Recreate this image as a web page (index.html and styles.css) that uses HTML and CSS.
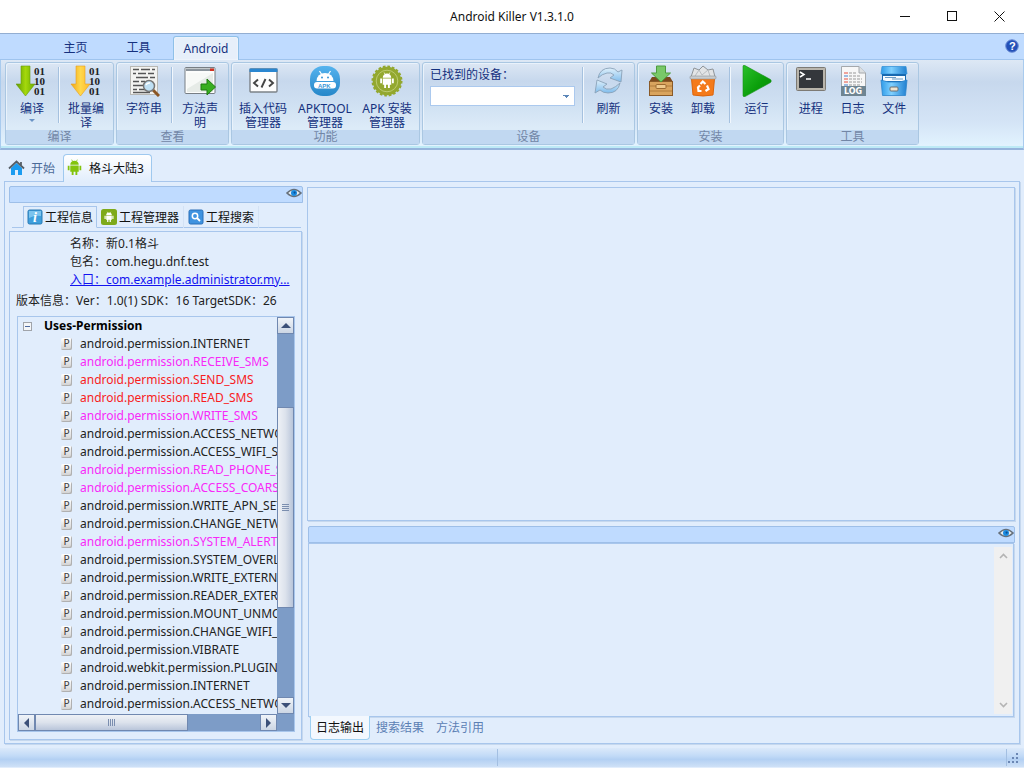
FILE: index.html
```html
<!DOCTYPE html>
<html lang="zh-CN">
<head>
    <meta charset="UTF-8">
    <meta name="viewport" content="width=device-width, initial-scale=1.0">
    <title>Android Killer V1.3.1.0</title>
    <link rel="stylesheet" href="styles.css">
</head>
<body>
    <!-- shared icons -->
    <svg class="defs" width="0" height="0" aria-hidden="true">
        <defs>
            <linearGradient id="green" x1="0" x2="1"><stop offset="0" stop-color="#5f9c00"/><stop offset=".5" stop-color="#a4d80c"/><stop offset="1" stop-color="#6cae00"/></linearGradient>
            <linearGradient id="gold" x1="0" x2="1"><stop offset="0" stop-color="#f0a818"/><stop offset=".5" stop-color="#ffd84c"/><stop offset="1" stop-color="#ffb82a"/></linearGradient>
            <linearGradient id="sky" x1="0" x2="0" y1="0" y2="1"><stop offset="0" stop-color="#55b3ee"/><stop offset="1" stop-color="#2687c9"/></linearGradient>
            <linearGradient id="play" x1="0" x2="1" y1="0" y2="1"><stop offset="0" stop-color="#2bc02b"/><stop offset=".6" stop-color="#0a9e0a"/><stop offset="1" stop-color="#0a8a0a"/></linearGradient>
            <linearGradient id="pale" x1="0" x2="0" y1="0" y2="1"><stop offset="0" stop-color="#dff0fb"/><stop offset="1" stop-color="#7fbcec"/></linearGradient>
            <linearGradient id="cabinet" x1="0" x2="1"><stop offset="0" stop-color="#2f9be8"/><stop offset=".4" stop-color="#7fd0ff"/><stop offset="1" stop-color="#1f7fd0"/></linearGradient>
        </defs>
        <symbol id="eye" viewBox="0 0 16 12">
            <path d="M1 6Q8-1 15 6Q8 13 1 6Z" fill="#e8eef2" stroke="#66707a" stroke-width="1.6"/>
            <circle cx="8" cy="6" r="3" fill="#1b8be0"/><circle cx="8.6" cy="5.6" r="1.1" fill="#0b4f96"/>
        </symbol>
        <symbol id="droid" viewBox="0 0 16 18">
            <path d="M3.5 6A4.5 4.3 0 0 1 12.500 6ZM3.500 6.800H12.500V13.500H11V17H9V13.500H7V17H5V13.500H3.500ZM.8 7H2.700V12H.8ZM13.300 7H15.200V12H13.300Z"/>
            <path d="M5 .6L6 2.600M11 .6L10 2.600" stroke="currentColor" stroke-width=".8"/>
        </symbol>
    </svg>

    <div class="window">
        <header class="titlebar">
            <h1>Android Killer V1.3.1.0</h1>
            <div class="window-buttons">
                <button aria-label="Minimize"><svg width="11" height="11"><path d="M0 5.500H10" stroke="#111"/></svg></button>
                <button aria-label="Maximize"><svg width="11" height="11"><rect x=".5" y=".5" width="9" height="9" fill="none" stroke="#111"/></svg></button>
                <button aria-label="Close"><svg width="11" height="11"><path d="M.5 .5L10.500 10.500M10.500 .5L.5 10.500" stroke="#111"/></svg></button>
            </div>
        </header>

        <nav class="ribbon-tabs">
            <button>主页</button>
            <button>工具</button>
            <button class="active">Android</button>
            <button class="help" aria-label="Help">
                <svg width="14" height="14" viewBox="0 0 14 14"><circle cx="7" cy="7" r="6.300" fill="#2350b8" stroke="#6d8fd6"/><text x="4" y="11" font-family="Liberation Sans" font-weight="bold" font-size="11" fill="#fff">?</text></svg>
            </button>
        </nav>

        <div class="ribbon">
            <section class="group g-build">
                <div class="group-body">
                    <button class="tool">
                        <svg width="32" height="32" viewBox="0 0 32 32"><path d="M5 1H14V19H19L9.500 31L0 19H5Z" fill="url(#green)" stroke="#6a9a10" stroke-width=".6"/><g class="bits"><text x="18" y="10">01</text><text x="18" y="20">10</text><text x="18" y="30">01</text></g></svg>
                        <span>编译</span><i class="drop"></i>
                    </button>
                    <div class="sep"></div>
                    <button class="tool">
                        <svg width="32" height="32" viewBox="0 0 32 32"><path d="M6 1H15V19H20L10.500 31L1 19H6Z" fill="url(#gold)" stroke="#e8a020" stroke-width=".6"/><g class="bits"><text x="19" y="10">01</text><text x="19" y="20">10</text><text x="19" y="30">01</text></g></svg>
                        <span>批量编<br>译</span>
                    </button>
                </div>
                <h2>编译</h2>
            </section>

            <section class="group g-view">
                <div class="group-body">
                    <button class="tool">
                        <svg width="32" height="32" viewBox="0 0 32 32"><rect x="2.500" y="1.500" width="27" height="28" fill="#f3f3f0" stroke="#b8b8b4"/><path d="M5 4.500H11M13 4.500H22M24 4.500H27M5 8.500H8M10 8.500H18M20 8.500H26M8 12.500H20M22 12.500H27M5 16.500H11M13 16.500H17M5 20.500H15M5 24.500H9M11 24.500H17M5 27.500H22" stroke="#555" stroke-width="1.400"/><path d="M25 25L31 31" stroke="#8a5524" stroke-width="3"/><circle cx="21" cy="21" r="5.500" fill="#bfe0f4" stroke="#777" stroke-width="1.500"/><path d="M18 20Q19 17.500 22 18" fill="none" stroke="#fff" stroke-width="1.500"/></svg>
                        <span>字符串</span>
                    </button>
                    <div class="sep"></div>
                    <button class="tool">
                        <svg width="32" height="32" viewBox="0 0 32 32"><rect x="1" y="2.500" width="30" height="26" rx="1" fill="#fcfdfc" stroke="#777e84"/><path d="M2 3.500H30V6H2Z" fill="#8b949c"/><path d="M26 3.500H30V6H26Z" fill="#d03020"/><path d="M3 8H29V27H3Z" fill="#e6ebe7"/><path d="M3 8H29L3 24Z" fill="#f7f9f7"/><path d="M17 19H23V14L31.500 22L23 30V25H17Z" fill="#38ae20" stroke="#1f7a10"/></svg>
                        <span>方法声<br>明</span>
                    </button>
                </div>
                <h2>查看</h2>
            </section>

            <section class="group g-func">
                <div class="group-body">
                    <button class="tool">
                        <svg width="32" height="32" viewBox="0 0 32 32"><rect x="3" y="4" width="27" height="23" rx="1" fill="#fdfdfd" stroke="#7c8288" stroke-width="1.400"/><path d="M2.500 3.500H30.500V7H2.500Z" fill="#2a86d0"/><path d="M11 14.500L7 18L11 21.500M22 14.500L26 18L22 21.500M18.500 14L14.500 22.500" fill="none" stroke="#444" stroke-width="1.900"/></svg>
                        <span>插入代码<br>管理器</span>
                    </button>
                    <button class="tool">
                        <svg width="32" height="32" viewBox="0 0 32 32"><rect x="1" y="1" width="30" height="30" rx="13" fill="url(#sky)"/><path d="M7.500 16A8.500 8 0 0 1 24.500 16Z" fill="#fff"/><path d="M10.500 6L13 10M21.500 6L19 10" stroke="#fff" stroke-width="1.200"/><circle cx="13" cy="12.500" r="1" fill="#3a97d8"/><circle cx="19" cy="12.500" r="1" fill="#3a97d8"/><rect x="5" y="17" width="22" height="6.500" rx="3" fill="#fff"/><text x="9" y="22.500" font-family="Liberation Sans" font-weight="bold" font-size="6" fill="#3a97d8">APK</text></svg>
                        <span>APKTOOL<br>管理器</span>
                    </button>
                    <button class="tool">
                        <svg width="32" height="32" viewBox="0 0 32 32"><circle cx="16" cy="16" r="14.300" fill="#93a82f" stroke="#93a82f" stroke-width="2.400" stroke-dasharray="2.600 1.890"/><circle cx="16" cy="16" r="10.800" fill="none" stroke="#bccb70"/><use href="#droid" x="8" y="7" width="16" height="17" fill="#fff" color="#fff"/></svg>
                        <span>APK 安装<br>管理器</span>
                    </button>
                </div>
                <h2>功能</h2>
            </section>

            <section class="group g-device">
                <div class="group-body">
                    <div class="device">
                        <label for="device">已找到的设备：</label>
                        <select id="device"><option></option></select>
                    </div>
                    <div class="sep"></div>
                    <button class="tool">
                        <svg width="32" height="32" viewBox="0 0 32 32"><g fill="url(#pale)" stroke="#8aa2b8" stroke-width=".9"><path d="M5 13Q7 3 17 3Q22 3 25 7L29 5L28 17L17 13L21 10Q18 7 14 8Q9 9 5 13Z"/><path d="M27 18Q25 28 15 28Q10 28 7 25L2 28L4 15L14 19L10 22Q13 25 18 24Q23 22 27 18Z"/></g></svg>
                        <span>刷新</span>
                    </button>
                </div>
                <h2>设备</h2>
            </section>

            <section class="group g-install">
                <div class="group-body">
                    <button class="tool narrow">
                        <svg width="32" height="32" viewBox="0 0 32 32"><path d="M4 17L7 12H25L28 17Z" fill="#7b4a1e"/><rect x="4.500" y="16.500" width="23" height="14" fill="#d9a45e" stroke="#8a5a28"/><path d="M5 21H27M5 26H27" stroke="#b07c3c"/><rect x="11" y="19.500" width="10" height="4" rx="1" fill="#efc98c" stroke="#9c6a30"/><path d="M11.500 1H20.500V8H25.500L16 17L6.500 8H11.500Z" fill="#79c868" stroke="#4e9c40"/></svg>
                        <span>安装</span>
                    </button>
                    <button class="tool narrow">
                        <svg width="32" height="32" viewBox="0 0 32 32"><path d="M4 12L7 3L12 5L16 1L21 5L26 4L28 12Z" fill="#e2e4e6" stroke="#8f9498"/><path d="M8 11L12 5L15 10L21 5L23 11" fill="none" stroke="#b8bcc0"/><path d="M4.500 13.500H27.500L26 30Q16 32 6 30Z" fill="#f47a1a" stroke="#dc640a"/><rect x="3" y="11" width="26" height="3" rx="1" fill="#c8ccd0" stroke="#8f9498" stroke-width=".6"/><path d="M13.500 19L15.800 16.500L18.500 19M20 20.500L21.500 24L18.500 26M14.500 26H11.500L11 22.500L13 20.500" fill="none" stroke="#fff" stroke-width="2.200"/></svg>
                        <span>卸载</span>
                    </button>
                    <div class="sep"></div>
                    <button class="tool">
                        <svg width="32" height="32" viewBox="0 0 32 32"><path d="M2 1.500Q2-.5 4 .6L29.500 14.500Q31 16 29.500 17.500L4 31.600Q2 32 2 30.500Z" fill="url(#play)" stroke="#189018" stroke-width=".6"/></svg>
                        <span>运行</span>
                    </button>
                </div>
                <h2>安装</h2>
            </section>

            <section class="group g-tools">
                <div class="group-body">
                    <button class="tool">
                        <svg width="32" height="32" viewBox="0 0 32 32"><rect x="1.500" y="2.500" width="29" height="23" rx="1" fill="#b9b5ac" stroke="#7d7a74"/><rect x="4" y="5" width="24" height="18" fill="#34373c"/><path d="M5 7L9 9.500L5 12M11 14H16" fill="none" stroke="#fff" stroke-width="1.500"/></svg>
                        <span>进程</span>
                    </button>
                    <button class="tool">
                        <svg width="32" height="32" viewBox="0 0 32 32"><path d="M4.500 1.500H22L28.500 8V22H4.500Z" fill="#f7f7f7" stroke="#a4a8ac"/><path d="M22 1.500V8H28.500" fill="#dde0e2" stroke="#a4a8ac"/><path d="M7 8H11M7 14H11M7 17H11" stroke="#e85040" stroke-width="1.200"/><path d="M7 11H11M7 20H11" stroke="#4080d0" stroke-width="1.200"/><path d="M12 8H20M12 11H24M12 14H25M12 17H25M12 20H23" stroke="#999" stroke-dasharray="3 1"/><rect x="4" y="21" width="25" height="10" fill="#6f8592"/><text x="7" y="29" font-family="DejaVu Sans" font-weight="bold" font-size="8" fill="#fff">LOG</text></svg>
                        <span>日志</span>
                    </button>
                    <button class="tool">
                        <svg width="32" height="32" viewBox="0 0 32 32"><path d="M4 1.500H28L29 9H3Z" fill="url(#cabinet)" stroke="#3a94d8" stroke-width=".8"/><rect x="4" y="9" width="24" height="9" fill="#1769b0"/><path d="M5 11H27V16H5Z" fill="#f6fbff"/><path d="M7 12.500H18M14 14H25" stroke="#6d9cc4"/><path d="M3 15L10 17H22L29 15L27.500 30.500H4.500Z" fill="url(#cabinet)" stroke="#2c84cc" stroke-width=".8"/><rect x="12" y="22" width="8" height="4" rx="1" fill="#eee4d0" stroke="#6a6e72"/></svg>
                        <span>文件</span>
                    </button>
                </div>
                <h2>工具</h2>
            </section>
        </div>

        <nav class="doc-tabs">
            <button>
                <svg width="17" height="16" viewBox="0 0 17 16"><path d="M3 8L8.500 3L14 8V15H10V10H7V15H3Z" fill="#1b9cf0"/><path d="M1 8.500L8.500 1.500L16 8.500M13 2V5" fill="none" stroke="#555e66" stroke-width="1.800"/></svg>
                开始
            </button>
            <button class="active">
                <svg class="green-droid" width="15" height="17"><use href="#droid"/></svg>
                格斗大陆3
            </button>
        </nav>

        <main class="workspace">
            <aside class="side">
                <div class="bar"><svg width="16" height="12"><use href="#eye"/></svg></div>
                <nav class="side-tabs">
                    <button class="active">
                        <svg width="16" height="16" viewBox="0 0 16 16"><rect x="1" y="1" width="14" height="14" rx="1.500" fill="#3f9fdc" stroke="#2a7ab4"/><path d="M2 2H14V7Q8 6 2 9Z" fill="#7cc4ee"/><text x="6" y="13" font-family="Liberation Serif" font-style="italic" font-weight="bold" font-size="14" fill="#fff">i</text></svg>
                        工程信息
                    </button>
                    <button>
                        <svg width="16" height="16" viewBox="0 0 16 16"><rect width="16" height="16" rx="2.500" fill="#7eaa1a"/><use href="#droid" x="3" y="2" width="10" height="12" fill="#fff" color="#fff"/></svg>
                        工程管理器
                    </button>
                    <button>
                        <svg width="16" height="16" viewBox="0 0 16 16"><rect x="1" y="1" width="14" height="14" rx="1.500" fill="#3f93e0" stroke="#2a6fb8"/><circle cx="7" cy="7" r="2.700" fill="none" stroke="#fff" stroke-width="1.500"/><path d="M9 9L12 12" stroke="#fff" stroke-width="1.800"/></svg>
                        工程搜索
                    </button>
                </nav>
                <div class="info">
                    <dl>
                        <div><dt>名称：</dt><dd>新0.1格斗</dd></div>
                        <div><dt>包名：</dt><dd>com.hegu.dnf.test</dd></div>
                    </dl>
                    <a class="entry" href="#">入口：com.example.administrator.my...</a>
                    <p class="version">版本信息：Ver：1.0(1) SDK：16 TargetSDK：26</p>

                    <div class="tree">
                        <div class="tree-view">
                            <div class="root"><button class="fold" aria-label="Collapse"></button>Uses-Permission</div>
                            <ul id="permissions"></ul>
                        </div>
                        <div class="vscroll">
                            <button aria-label="Scroll up"><i class="arrow up"></i></button>
                            <div class="track"><div class="thumb"></div></div>
                            <button aria-label="Scroll down"><i class="arrow down"></i></button>
                        </div>
                        <div class="hscroll">
                            <button aria-label="Scroll left"><i class="arrow left"></i></button>
                            <div class="track"><div class="thumb"></div></div>
                            <button aria-label="Scroll right"><i class="arrow right"></i></button>
                        </div>
                        <div class="corner"></div>
                    </div>
                </div>
            </aside>

            <div class="content">
                <section class="editor"></section>
                <section class="output">
                    <div class="bar"><svg width="16" height="12"><use href="#eye"/></svg></div>
                    <div class="log">
                        <div class="log-scroll">
                            <svg width="9" height="6"><path d="M1 5L4.500 1.500L8 5" fill="none" stroke="#b4b4b4" stroke-width="1.600"/></svg>
                            <svg width="9" height="6"><path d="M1 1L4.500 4.500L8 1" fill="none" stroke="#b4b4b4" stroke-width="1.600"/></svg>
                        </div>
                    </div>
                    <nav class="output-tabs">
                        <button class="active">日志输出</button>
                        <button>搜索结果</button>
                        <button>方法引用</button>
                    </nav>
                </section>
            </div>
        </main>

        <footer class="statusbar">
            <div></div>
            <div class="message"></div>
            <svg width="12" height="12"><path d="M9 1H11V3H9ZM5 5H7V7H5ZM9 5H11V7H9ZM1 9H3V11H1ZM5 9H7V11H5ZM9 9H11V11H9Z" fill="#6b87b4"/></svg>
        </footer>
    </div>

    <script>
        const permissions = [
            ['android.permission.INTERNET'],
            ['android.permission.RECEIVE_SMS', 'warn'],
            ['android.permission.SEND_SMS', 'danger'],
            ['android.permission.READ_SMS', 'danger'],
            ['android.permission.WRITE_SMS', 'warn'],
            ['android.permission.ACCESS_NETWORK_STATE'],
            ['android.permission.ACCESS_WIFI_STATE'],
            ['android.permission.READ_PHONE_STATE', 'warn'],
            ['android.permission.ACCESS_COARSE_LOCATION', 'warn'],
            ['android.permission.WRITE_APN_SETTINGS'],
            ['android.permission.CHANGE_NETWORK_STATE'],
            ['android.permission.SYSTEM_ALERT_WINDOW', 'warn'],
            ['android.permission.SYSTEM_OVERLAY_WINDOW'],
            ['android.permission.WRITE_EXTERNAL_STORAGE'],
            ['android.permission.READER_EXTERNAL_STORAGE'],
            ['android.permission.MOUNT_UNMOUNT_FILESYSTEMS'],
            ['android.permission.CHANGE_WIFI_STATE'],
            ['android.permission.VIBRATE'],
            ['android.webkit.permission.PLUGIN'],
            ['android.permission.INTERNET'],
            ['android.permission.ACCESS_NETWORK_STATE']
        ];

        const list = document.getElementById('permissions');
        permissions.forEach(([name, level]) => {
            const item = document.createElement('li');
            if (level) item.className = level;
            item.innerHTML = '<i class="key">P</i>';
            item.append(name);
            list.appendChild(item);
        });
    </script>
</body>
</html>
```
FILE: styles.css
```css
* {
    box-sizing: border-box;
}
body {
    margin: 0;
    font-family: "Noto Sans", "Noto Sans CJK SC", sans-serif;
    font-size: 12px;
    color: #222;
    background: #fff;
}
button {
    padding: 0;
    border: 0;
    background: none;
    font: inherit;
    color: inherit;
}
svg {
    flex: none;
    display: block;
}
.defs {
    position: absolute;
}
h1, h2, p, dl, dd, ul {
    margin: 0;
    padding: 0;
}
.window {
    display: flex;
    flex-direction: column;
    height: 100vh;
    padding-bottom: 1px;
    background: #e1edfc;
}

/* title bar */
.titlebar {
    display: grid;
    grid-template-columns: 1fr auto 1fr;
    align-items: center;
    height: 34px;
    background: #fff;
    border-bottom: 1px solid #93aed2;
}
.titlebar h1 {
    grid-column: 2;
    font-size: 12px;
    font-weight: normal;
    color: #111;
}
.window-buttons {
    display: flex;
    justify-content: flex-end;
    padding-right: 1px;
}
.window-buttons button {
    display: flex;
    justify-content: center;
    width: 47px;
}

/* ribbon */
.ribbon-tabs {
    display: flex;
    align-items: flex-end;
    height: 26px;
    padding: 0 5px 0 44px;
    background: #bfdbff;
    border-bottom: 1px solid #9fc4ee;
    color: #15317e;
    line-height: 22px;
}
.ribbon-tabs button {
    width: 63px;
    height: 23px;
}
.ribbon-tabs .active {
    width: 66px;
    margin: 0 0 -1px 3px;
    height: 24px;
    line-height: 20px;
    background: #e6effa;
    border: 1px solid #8fc0e8;
    border-bottom: 0;
    border-radius: 3px 3px 0 0;
    box-shadow: inset 0 0 2px #fff;
}
.ribbon-tabs .help {
    display: flex;
    width: 14px;
    height: 20px;
    margin-left: auto;
}
.ribbon {
    display: flex;
    gap: 2px;
    padding: 2px 4px 3px;
    background: linear-gradient(#dde8f5, #c7d8ed 25%, #d4e4f6 70%, #e3f4ff);
    border: 1px solid #a9cbee;
    border-top: 0;
    border-bottom: 2px solid #96b4dc;
    box-shadow: inset 0 -2px #bdeaf6;
}
.group {
    display: flex;
    flex-direction: column;
    border: 1px solid #aac7e2;
    border-radius: 3px;
    box-shadow: inset 1px 1px #e9f2fb;
    background: linear-gradient(#dce7f4, #c7d8ed 22%, #cfe0f2 50%, #dcebf8 80%);
}
.group-body {
    display: flex;
    height: 67px;
    padding-right: 1px;
}
.group h2 {
    height: 14px;
    font-size: 12px;
    line-height: 14px;
    font-weight: normal;
    text-align: center;
    color: #7286a6;
    background: #c1d8f1;
}
.g-build { width: 109px; }
.g-view { width: 113px; }
.g-func { width: 189px; }
.g-device { width: 213px; }
.g-install { width: 147px; }
.g-tools { width: 133px; }
.tool {
    display: flex;
    flex: 1;
    flex-direction: column;
    align-items: center;
    min-width: 0;
    padding-top: 2px;
    color: #15317e;
    line-height: 14px;
    white-space: nowrap;
}
.tool.narrow {
    flex: 0 0 42px;
}
.tool span {
    margin-top: 5px;
}
.g-install .group-body {
    padding-left: 2px;
}
.g-tools .group-body {
    padding: 0 3px;
}
.g-install .sep {
    margin-left: 5px;
}
.bits {
    font: bold 11px "Liberation Serif", serif;
    fill: #222;
}
.sep {
    width: 2px;
    height: 56px;
    margin-top: 4px;
    background: #a5c1df;
    border-right: 1px solid #f1f7fd;
}
.drop {
    margin-top: 3px;
    border: 3px solid transparent;
    border-top-color: #6a93c5;
    border-bottom: 0;
}
.device {
    width: 159px;
    padding: 5px 7px 0;
    color: #15317e;
}
.device label {
    display: block;
    height: 18px;
    line-height: 14px;
}
.device select {
    appearance: none;
    display: block;
    width: 100%;
    height: 20px;
    border: 1px solid #abc9ee;
    border-radius: 0;
    background: linear-gradient(45deg, transparent 50%, #5b86b8 50%) right 8px top 8px / 3px 3px no-repeat,
                linear-gradient(-45deg, transparent 50%, #5b86b8 50%) right 5px top 8px / 3px 3px no-repeat #fff;
}

/* document tabs */
.doc-tabs {
    display: flex;
    align-items: flex-end;
    height: 31px;
    padding-left: 4px;
    color: #4a6a98;
}
.doc-tabs button {
    display: flex;
    align-items: center;
    gap: 6px;
    height: 26px;
    padding: 0 8px 0 4px;
}
.doc-tabs .active {
    position: relative;
    height: 28px;
    margin-bottom: -1px;
    padding: 0 7px 2px 3px;
    gap: 7px;
    color: #111;
    background: linear-gradient(#fff, #e1edfc);
    border: 1px solid #9fc9ef;
    border-bottom: 0;
    border-radius: 4px 4px 0 0;
}
.green-droid {
    fill: #83c40c;
    color: #83c40c;
}

/* main area */
.workspace {
    display: flex;
    flex: 1;
    gap: 4px;
    min-height: 0;
    margin: 0 4px 4px;
    padding: 4px 3px 3px 4px;
    border: 1px solid #a8c6ec;
}
.workspace, .info, .editor, .log {
    box-shadow: 1px 1px #c6d8ee;
}
.bar {
    display: flex;
    justify-content: flex-end;
    height: 17px;
    border: 1px solid #9ebfe8;
    background: #bfdbff;
    border-radius: 2px 2px 0 0;
}
.side {
    display: flex;
    flex-direction: column;
    width: 294px;
    min-height: 0;
}
.side-tabs {
    display: flex;
    height: 22px;
    margin: 3px 2px 3px 3px;
    padding-left: 11px;
    border-bottom: 1px solid #a8c6ec;
    color: #111;
}
.side-tabs button {
    display: flex;
    align-items: center;
    gap: 2px;
    height: 22px;
    padding: 0 4px;
    border-right: 1px solid #d3e2f5;
}
.side-tabs .active {
    padding: 0 3px;
    border: 1px solid #a8c6ec;
    border-bottom-color: #e1edfc;
}
.info {
    display: flex;
    flex: 1;
    flex-direction: column;
    min-height: 0;
    margin-right: 1px;
    padding: 3px 6px 7px 7px;
    border: 1px solid #a8c6ec;
    line-height: 18px;
}
.info dl, .info .entry {
    padding-left: 53px;
}
.info dl div {
    display: flex;
}
.entry {
    white-space: nowrap;
    color: #1414f0;
}
.version {
    margin: 3px 0 6px -1px;
    white-space: nowrap;
}

/* permission tree */
.tree {
    display: grid;
    flex: 1;
    grid-template: minmax(0, 1fr) 17px / minmax(0, 1fr) 17px;
    min-height: 0;
    border: 1px solid #a8c6ec;
}
.tree-view {
    overflow: hidden;
    line-height: 18px;
    white-space: nowrap;
}
.root {
    display: flex;
    align-items: center;
    gap: 12px;
    height: 18px;
    padding-left: 5px;
    font-weight: bold;
    color: #000;
}
.fold {
    width: 9px;
    height: 9px;
    border: 1px solid #a0a4aa;
    background: linear-gradient(#4c69a0, #4c69a0) center / 5px 1px no-repeat #f4f6f8;
}
.tree ul {
    list-style: none;
}
.tree li {
    display: flex;
    align-items: center;
    gap: 8px;
    height: 18px;
    padding-left: 43px;
}
.key {
    flex: none;
    width: 11px;
    height: 12px;
    font: 10px/12px "DejaVu Sans", sans-serif;
    text-align: center;
    color: #444;
    background: linear-gradient(#fff, #d0d0d0);
    border-radius: 2px;
    box-shadow: inset -1px -1px #b0b0b0;
}
.warn {
    color: #f828f8;
}
.danger {
    color: #f81c1c;
}
.vscroll, .hscroll {
    display: flex;
    background: #7d9cc7;
}
.vscroll {
    flex-direction: column;
}
.vscroll button, .hscroll button {
    display: flex;
    align-items: center;
    justify-content: center;
    width: 17px;
    height: 17px;
    border: 1px solid #7088b0;
    background: linear-gradient(#f0f4f9, #ccd6e4);
}
.track {
    display: flex;
    flex: 1;
}
.thumb {
    border: 1px solid #7088b0;
}
.vscroll .track {
    padding-top: 73px;
}
.vscroll .thumb {
    width: 17px;
    height: 201px;
    background: repeating-linear-gradient(#7b8eaf 0 1px, transparent 1px 2px) center / 7px 7px no-repeat,
                linear-gradient(90deg, #eef1f6, #dce2ec 50%, #b9c5da);
}
.hscroll .thumb {
    width: 153px;
    height: 17px;
    background: repeating-linear-gradient(90deg, #7b8eaf 0 1px, transparent 1px 2px) center / 7px 7px no-repeat,
                linear-gradient(#eef1f6, #dce2ec 50%, #b9c5da);
}
.corner {
    background: #7d9cc7;
}
.arrow {
    border: 5px solid transparent;
}
.up { border-top: 0; border-bottom-color: #3c5078; }
.down { border-bottom: 0; border-top-color: #3c5078; }
.left { border-left: 0; border-right-color: #3c5078; }
.right { border-right: 0; border-left-color: #3c5078; }

/* editor and output */
.content {
    display: flex;
    flex: 1;
    flex-direction: column;
    gap: 5px;
    min-width: 0;
    padding: 1px 1px 0 0;
}
.editor {
    flex: 1;
    border: 1px solid #a8c6ec;
}
.output {
    display: flex;
    flex-direction: column;
    height: 214px;
    margin-left: 1px;
}
.log {
    display: flex;
    flex: 1;
    justify-content: flex-end;
    margin-right: 1px;
    padding: 3px 1px 2px;
    border: 1px solid #a8c6ec;
}
.log-scroll {
    display: flex;
    flex-direction: column;
    align-items: center;
    justify-content: space-between;
    width: 18px;
    padding: 6px 0;
    background: #f0f0f0;
}
.output-tabs {
    display: flex;
    height: 23px;
    padding-left: 2px;
    color: #5c80b4;
    line-height: 20px;
}
.output-tabs button {
    padding: 0 6px;
    height: 21px;
}
.output-tabs .active {
    position: relative;
    margin-top: -1px;
    height: 24px;
    padding: 0 5px;
    color: #111;
    background: #f3f8fe;
    border: 1px solid #9ed0f2;
    border-top: 0;
    border-radius: 0 0 4px 4px;
}

/* status bar */
.statusbar {
    display: flex;
    align-items: center;
    height: 19px;
    padding-right: 5px;
    background: linear-gradient(#dbe9fa, #c3dbf7 40%, #b3d0f3 60%, #cfe1f7);
}
.statusbar div {
    flex: 1;
    height: 17px;
    border-right: 1px solid #a3bfe2;
}
.statusbar .message {
    flex-basis: 12px;
}
```
